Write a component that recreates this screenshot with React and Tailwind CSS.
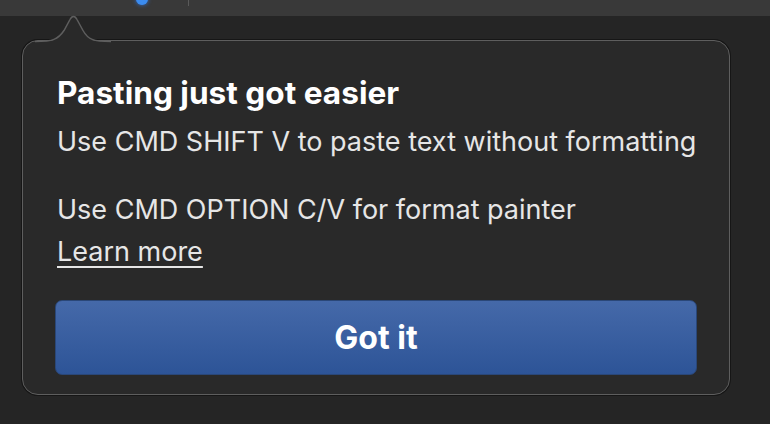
export default function App() {
  return (
    <div className="w-[770px] h-[424px] overflow-hidden bg-[#252525] font-['Inter',sans-serif]">
      <div className="relative h-[16px] bg-[#393939]">
        <div className="absolute left-[136px] top-[-7px] h-[12px] w-[12px] rounded-full bg-[#3b8cf0] shadow-[0_0_4px_#2f6fd0]" />
        <div className="absolute left-[188px] top-0 h-[6px] w-[1px] bg-[#5a5a5a]" />
      </div>

      <div className="relative ml-[22px] mt-[24px] w-[708px] h-[355px] rounded-[16px] border-[1.5px] border-[#5e5e5e] bg-[#292929] shadow-[0_0_0_1px_#161616] px-[32px] pt-[33px]">
        <svg
          className="absolute left-[12px] top-[-27px]"
          width="76"
          height="29"
          viewBox="0 0 76 29"
        >
          <path
            d="M0 28 C18 28 23 26 29 17 L35 6 C37 2 40 2 42 6 L48 17 C53 26 58 28 76 28 L76 29 L0 29 Z"
            fill="#292929"
          />
          <path
            d="M0 27.5 C18 27.5 23 25.5 29 16.5 L35 5.5 C37 1.5 40 1.5 42 5.5 L48 16.5 C53 25.5 58 27.5 76 27.5"
            fill="none"
            stroke="#5e5e5e"
            strokeWidth="1.5"
          />
        </svg>

        <div className="ml-[2px]">
          <h1 className="text-[31.6px] leading-[37px] font-bold text-white">Pasting just got easier</h1>
          <p className="mt-[14px] text-[27px] leading-[33px] text-[#e6e6e6]">
            Use CMD SHIFT V to paste text without formatting
          </p>
          <p className="mt-[35px] text-[27px] leading-[33px] text-[#e6e6e6]">
            Use CMD OPTION C/V for format painter
          </p>
          <a className="mt-[9px] block w-fit text-[27px] leading-[33px] text-[#e6e6e6] underline underline-offset-[5px] decoration-[2px]">
            Learn more
          </a>
        </div>

        <button className="mt-[32px] flex h-[75px] w-full items-center justify-center rounded-[7px] border border-[#2a4778] bg-gradient-to-b from-[#4569a9] to-[#2d5497] text-[32px] font-bold text-white">
          Got it
        </button>
      </div>
    </div>
  );
}
